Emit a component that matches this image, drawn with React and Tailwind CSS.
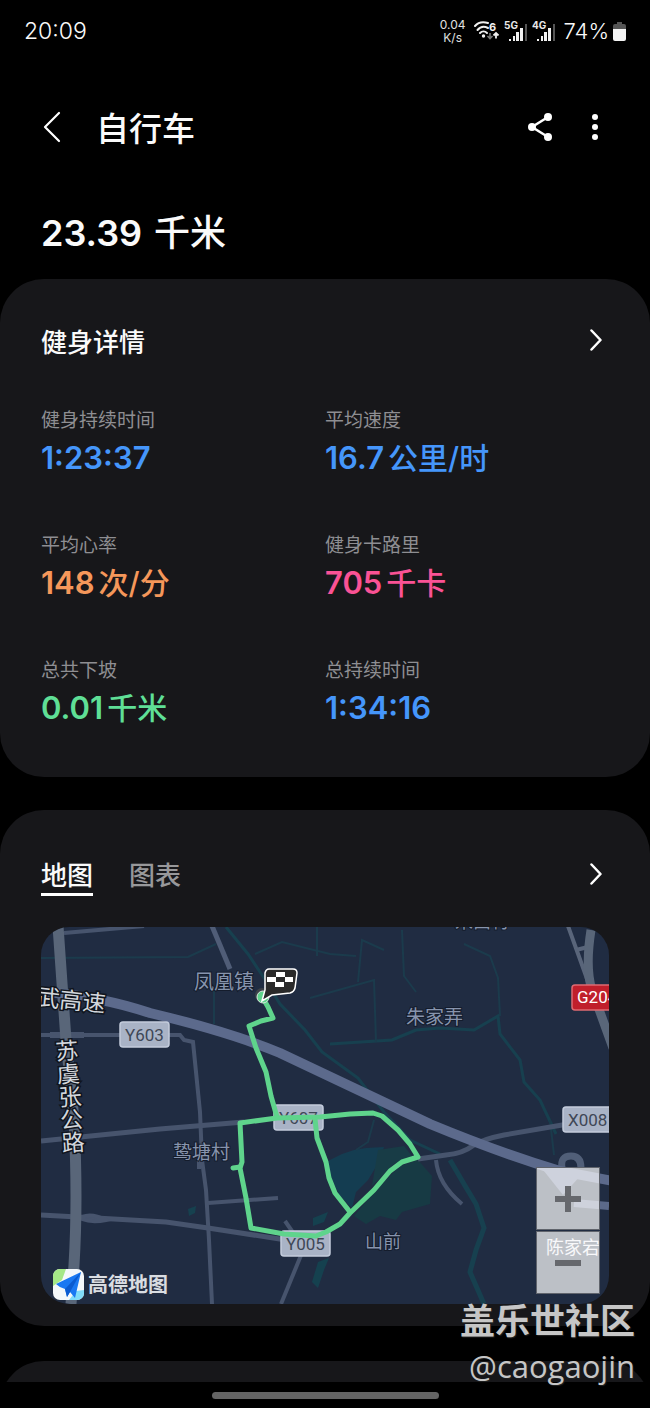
import { clsx } from 'clsx';

const stats = [
  { label: '健身持续时间', value: '1:23:37', color: 'text-[#4596fb]' },
  { label: '平均速度', value: '16.7', unit: '公里/时', color: 'text-[#4596fb]' },
  { label: '平均心率', value: '148', unit: '次/分', color: 'text-[#f5975a]' },
  { label: '健身卡路里', value: '705', unit: '千卡', color: 'text-[#fa5295]' },
  { label: '总共下坡', value: '0.01', unit: '千米', color: 'text-[#5fdf96]' },
  { label: '总持续时间', value: '1:34:16', color: 'text-[#4596fb]' },
];

const Signal = ({ label }) => (
  <svg viewBox="0 0 24 22" className="h-[22px] w-6" role="img" aria-label={label}>
    <text x="0" y="9" fontSize="10" fontWeight="700" fill="#e8e8e8">{label}</text>
    <g fill="#f2f2f2">
      <rect x="5" y="19" width="2" height="2" />
      <rect x="9" y="16" width="2" height="5" />
      <rect x="12" y="12" width="3" height="9" />
      <rect x="16" y="8" width="3" height="13" />
      <rect x="21" y="4" width="2" height="17" fill="#555" />
    </g>
  </svg>
);

const StatusBar = () => (
  <div className="flex h-[62px] items-center justify-between px-6">
    <span className="text-[23px] leading-6 font-light">20:09</span>
    <div className="flex items-center">
      <div className="text-center text-[12px] leading-[13px] text-[#e0e0e0]">
        <div>0.04</div>
        <div>K/s</div>
      </div>
      <svg viewBox="0 0 26 22" className="ml-2 h-[22px] w-[26px]" role="img" aria-label="Wi-Fi 6">
        <g fill="none" stroke="#f0f0f0" strokeWidth="2" strokeLinecap="round">
          <path d="M1 6 C4 2.500 9 1.500 14 3" />
          <path d="M3.500 10 C6 7 10 6 14 8" />
          <path d="M6 13 C8 11 11 11 13 13" />
        </g>
        <circle cx="9.500" cy="16" r="1.700" fill="#f0f0f0" />
        <text x="15" y="11" fontSize="11" fontWeight="700" fill="#f0f0f0">6</text>
        <path d="M16 13 V18 M13.500 16 L16 18.500 L18.500 16" fill="none" stroke="#777" strokeWidth="1.600" />
        <path d="M22 18.500 V13.500 M19.500 15.500 L22 13 L24.500 15.500" fill="none" stroke="#f0f0f0" strokeWidth="1.800" />
      </svg>
      <div className="ml-1 flex gap-1">
        <Signal label="5G" />
        <Signal label="4G" />
      </div>
      <span className="ml-2 text-[22px] leading-6 font-light">74%</span>
      <svg viewBox="0 0 13 19" className="ml-1 h-[19px] w-[13px]" role="img" aria-label="Battery">
        <path d="M4 0 H9 V2 H11 Q13 2 13 4 V8 H0 V4 Q0 2 2 2 H4 Z" fill="#555" />
        <path d="M0 7 H13 V17 Q13 19 11 19 H2 Q0 19 0 17 Z" fill="#f4f4f4" />
      </svg>
    </div>
  </div>
);

const Chevron = () => (
  <svg viewBox="0 0 12 24" className="h-6 w-3" aria-hidden="true">
    <path
      d="M1.500 1.500 L10.500 11 L1.500 20.500"
      fill="none"
      stroke="#fff"
      strokeWidth="2.500"
      strokeLinecap="round"
      strokeLinejoin="round"
    />
  </svg>
);

const RoadSign = ({ x, y, width = 49, children }) => (
  <g>
    <rect x={x} y={y} width={width} height="25" rx="3" fill="#a9b3c6" stroke="#c3ccdc" strokeWidth="1.500" />
    <text x={x + 5} y={y + 19} fontFamily="Roboto, sans-serif" fontSize="17" fill="#3f4756">{children}</text>
  </g>
);

const RouteMap = () => (
  <svg
    viewBox="41 927 568 377"
    className="block h-auto w-full"
    role="img"
    aria-label="骑行路线地图"
    fontFamily="'Noto Sans CJK SC', sans-serif"
  >
    <rect x="41" y="927" width="568" height="377" fill="#202c42" />

    {/* water and green areas */}
    <path d="M326 1162 L342 1154 L354 1150 L366 1148 L384 1147 L380 1160 L368 1180 L356 1192 L352 1208 L340 1196 L334 1184 L328 1172 Z" fill="#143d51" />
    <path d="M374 1192 L400 1166 L418 1160 L432 1176 L430 1204 L402 1212 L396 1220 L380 1216 L366 1224 L354 1216 Z" fill="#173a44" />
    <path d="M378 1150 L404 1146 L412 1156 L394 1164 L372 1186 Z" fill="#183c46" />
    <path d="M188 1209 L196 1206 L195 1213 L189 1216 Z" fill="#16414f" />
    <path d="M313 1218 L328 1212 L324 1222 L313 1226 Z M318 1262 L329 1258 L324 1270 L318 1288 L312 1282 Z" fill="#15414f" />
    <g fill="none" stroke="#17404f" strokeWidth="3">
      <path d="M226 927 L248 954 L264 978 L280 1004 L305 1030 L322 1052 L358 1078 L384 1112 L410 1140 L440 1154" />
      <path d="M450 1160 L464 1184 L476 1204 L484 1228 L476 1250 L470 1272 L484 1304" strokeWidth="5" />
      <path d="M330 1044 L392 1040 L416 1030 L440 1028 L474 1030 L498 1016 L500 1034 L520 1060 L524 1082 L540 1100 L556 1134" />
    </g>
    <g fill="none" stroke="#1b3b4c" strokeWidth="2">
      <path d="M41 958 L188 957 L216 944" />
      <path d="M255 954 L282 942 L330 954 L356 956" />
      <path d="M317 927 V956 M358 982 L362 940 L384 950 M402 930 L404 976 L416 992 M310 998 L374 980 L376 1042" />
      <path d="M464 944 L490 956 L498 978 L500 1016 M214 990 V1024 M550 1120 L554 1155 M374 1120 L368 1142 L356 1150" />
    </g>

    {/* minor roads */}
    <g fill="none" stroke="#47546d" strokeWidth="4">
      <path d="M64 933 L144 926" />
      <path d="M212 926 L230 969" strokeWidth="5" stroke="#505d77" />
      <path d="M41 1035 H180 L184 1040 L193 1042 L200 1112 L202 1160 L206 1190 L209 1240 L212 1304" />
      <path d="M50 1035 H84" strokeWidth="6" />
      <path d="M41 1141 L160 1129 L244 1122" strokeWidth="5" />
      <path d="M41 1215 L96 1218 L166 1222 L208 1228 L286 1240" strokeWidth="5" />
      <path d="M82 1217 Q92 1213 106 1220 Q92 1223 82 1219 Z" />
      <path d="M208 1203 L278 1198 M199 1157 V1169 M285 1221 L294 1234" />
      <path d="M304 1248 L281 1304" />
      <path d="M418 1159 L446 1155 Q462 1154 474 1145 Q484 1139 504 1135 L568 1124" strokeWidth="5" />
      <path d="M436 1160 Q438 1184 462 1204" />
      <path d="M568 926 L586 976 L594 1000 M576 950 L588 947" stroke="#59657a" />
    </g>

    {/* main roads */}
    <g fill="none" stroke="#596679">
      <path d="M58 926 L66 1040 L74 1120 Q78 1200 74 1265 L71 1304" strokeWidth="11" />
      <path d="M591 930 Q585 968 592 990 L613 1048" strokeWidth="9" />
      <path d="M562 1168 Q560 1156 571 1156 Q581 1156 581 1168" stroke="#515f78" strokeWidth="7" />
      <path d="M574 1203 L609 1206" stroke="#5c6a8a" strokeWidth="8" />
    </g>
    <path d="M540 1166 L582 1174 L563 1195 Z" fill="#5c6a8c" />
    <path
      d="M36 991 Q100 996 150 1013 Q230 1032 280 1053 L430 1124 Q500 1153 560 1171 L613 1181"
      fill="none"
      stroke="#5c6a8c"
      strokeWidth="10"
    />

    <RoadSign x={120} y={1022}>Y603</RoadSign>
    <RoadSign x={274} y={1105}>Y607</RoadSign>
    <RoadSign x={281} y={1231}>Y005</RoadSign>
    <RoadSign x={563} y={1107} width={50}>X008</RoadSign>
    <rect x="572" y="985" width="50" height="25" rx="3" fill="#c01f2b" stroke="#de6a72" strokeWidth="1.500" />
    <text x="577" y="1003" fontFamily="Roboto, sans-serif" fontSize="17" fill="#fff">G204</text>

    {/* recorded track */}
    <g fill="none" stroke="#5fd48c" strokeWidth="5" strokeLinejoin="round" strokeLinecap="round">
      <path d="M264 1000 L268 1007 L273 1018 L261 1021 L249 1026 L256 1048 L266 1072 L271 1096 L277 1117" />
      <path d="M240 1123 L277 1118 L320 1117 L350 1114 L373 1113 L382 1116 L398 1130 L410 1144 L418 1157 L402 1162 L390 1171 L374 1190 L350 1213 L340 1224 L326 1232 L316 1236 L284 1234 L251 1228 L246 1198 L240 1168 L242 1162 Z" />
      <path d="M240 1167 L233 1168 M315 1119 L317 1138 L326 1162 L329 1178 L335 1193 L350 1212" />
    </g>

    {/* place names */}
    <g fill="#8794ad" fontSize="19" stroke="#141c2c" strokeWidth="2" paintOrder="stroke">
      <text x="194" y="989" fontSize="20">凤凰镇</text>
      <text x="406" y="1024">朱家弄</text>
      <text x="173" y="1159">鸷塘村</text>
      <text x="365" y="1248" fontSize="18">山前</text>
      <text x="455" y="928" fontSize="18">宋西村</text>
    </g>
    <g fill="#d3d7dc" fontSize="23" stroke="#10151e" strokeWidth="3" paintOrder="stroke">
      <text x="36" y="1005" transform="rotate(6 36 1005)">武高速</text>
      <text x="66" y="1039" transform="rotate(-4 66 1039)" style={{ writingMode: 'vertical-rl' }}>苏虞张公路</text>
    </g>

    {/* finish flag */}
    <circle cx="262" cy="995" r="7" fill="#3b4048" />
    <circle cx="263" cy="997" r="6" fill="#5fd48c" stroke="#d7e6dd" strokeWidth="1" />
    <path
      d="M269 969 H293 Q297 969 297 973 L295 988 Q294 992 290 993 L272 995 L262 1001 L265 990 L265 973 Q266 969 269 969 Z"
      fill="#2a2a2a"
      stroke="#fff"
      strokeWidth="1.500"
    />
    <path
      d="M276 972 H285 V977 H276 Z M267 977 H276 V982 H267 Z M285 977 H293 V982 H285 Z M275 982 H284 V987 H275 Z"
      fill="#fff"
    />

    {/* map provider */}
    <clipPath id="provider">
      <rect x="53" y="1269" width="31" height="31" rx="7" />
    </clipPath>
    <g clipPath="url(#provider)">
      <rect x="53" y="1269" width="31" height="31" fill="#f4f8fa" />
      <path d="M53 1269 H66 L62 1280 L53 1286 Z" fill="#a5e887" />
      <path d="M69 1300 L76 1291 L84 1290 V1300 Z" fill="#7fdcfa" />
    </g>
    <path d="M81 1272 L56 1284 Q60 1288 65 1289 L67 1297 L70 1292 L75 1298 Z" fill="#1a78f2" />
    <path d="M81 1272 L65 1289 L67 1297 L70 1292 Z" fill="#0b5bd0" />
    <text x="88" y="1292" fontSize="20" fontWeight="700" fill="#d9dde2" stroke="#2c3342" strokeWidth="1" paintOrder="stroke">高德地图</text>

    <text x="546" y="1254" fontSize="18" fill="#e6e8ee">陈家宕</text>
  </svg>
);

const App = () => {
  return (
    <div className="relative overflow-hidden bg-black font-[Inter,'Noto_Sans_CJK_SC',sans-serif] text-[#fafafa]">
      <StatusBar />

      {/* App bar */}
      <header className="flex h-[130px] items-center pr-[49px] pl-10">
        <button type="button" aria-label="返回" className="flex h-10 w-6 items-center">
          <svg viewBox="0 0 24 32" className="h-8 w-6">
            <path d="M19 2 L5 16 L19 30" fill="none" stroke="#fff" strokeWidth="2.200" strokeLinecap="round" strokeLinejoin="round" />
          </svg>
        </button>
        <h1 className="ml-8 pt-1 text-[33px] leading-10 font-medium">自行车</h1>
        <button type="button" aria-label="分享" className="ml-auto">
          <svg viewBox="0 0 26 30" className="h-[30px] w-[26px]">
            <path d="M21 5 L5 15 L21 25" fill="none" stroke="#fff" strokeWidth="2.500" />
            <circle cx="21" cy="5" r="4" fill="#fff" />
            <circle cx="5" cy="15" r="4" fill="#fff" />
            <circle cx="21" cy="25" r="4" fill="#fff" />
          </svg>
        </button>
        <button type="button" aria-label="更多选项" className="ml-9">
          <svg viewBox="0 0 12 30" className="h-[30px] w-3" fill="#fff">
            <circle cx="6" cy="5" r="3" />
            <circle cx="6" cy="15" r="3" />
            <circle cx="6" cy="25" r="3" />
          </svg>
        </button>
      </header>

      <div className="flex h-[87px] items-center gap-3 px-[41px] pb-[6px] leading-[44px] font-semibold">
        <span className="text-[36px]">23.39</span>
        <span className="text-[36px] font-medium">千米</span>
      </div>

      {/* Workout details */}
      <section className="rounded-[44px] bg-[#17171a] px-[41px] pt-9 pb-12">
        <div className="flex h-[52px] items-center justify-between pr-[7px]">
          <h2 className="pt-[3px] text-[26px] leading-8 font-medium">健身详情</h2>
          <button type="button" aria-label="查看健身详情">
            <Chevron />
          </button>
        </div>
        <dl className="mt-[42px] grid grid-cols-2 gap-y-[55px]">
          {stats.map((stat) => (
            <div key={stat.label}>
              <dt className="text-[19px] leading-6 text-[#8e8e92]">{stat.label}</dt>
              <dd className={clsx('mt-1 flex h-[42px] items-center gap-1 leading-10 font-semibold', stat.color)}>
                <span className="text-[31px]">{stat.value}</span>
                {stat.unit && <span className="text-[30px] font-medium">{stat.unit}</span>}
              </dd>
            </div>
          ))}
        </dl>
      </section>

      {/* Map */}
      <section className="mt-[33px] rounded-[44px] bg-[#17171a] px-[41px] pt-11 pb-[22px]">
        <div className="flex items-center justify-between pr-[7px]">
          <div role="tablist" className="flex gap-9 text-[26px] leading-[34px] font-medium">
            <button type="button" role="tab" aria-selected="true" className="border-b-3 border-white pt-[5px]">
              地图
            </button>
            <button type="button" role="tab" aria-selected="false" className="border-b-3 border-transparent pt-[5px] text-[#98989a]">
              图表
            </button>
          </div>
          <button type="button" aria-label="查看地图">
            <Chevron />
          </button>
        </div>
        <div className="relative mt-[31px] overflow-hidden rounded-[28px]">
          <RouteMap />
          <div className="absolute right-[9px] bottom-[10px] flex flex-col gap-px">
            <button type="button" aria-label="放大" className="flex h-[63px] w-16 items-center justify-center border border-[#60646c] bg-white/70">
              <svg viewBox="0 0 26 26" className="h-[26px] w-[26px]" fill="#66686d">
                <path d="M10 0 H16 V10 H26 V16 H16 V26 H10 V16 H0 V10 H10 Z" />
              </svg>
            </button>
            <button type="button" aria-label="缩小" className="flex h-[63px] w-16 items-center justify-center border border-[#60646c] bg-white/70">
              <svg viewBox="0 0 26 26" className="h-[26px] w-[26px]" fill="#66686d">
                <path d="M0 10 H26 V16 H0 Z" />
              </svg>
            </button>
          </div>
        </div>
      </section>

      {/* Top edge of the next card */}
      <div className="mt-[35px] h-[21px] overflow-hidden">
        <div className="h-24 rounded-[44px] bg-[#17171a]" />
      </div>

      {/* Navigation handle */}
      <div className="flex h-[26px] items-center justify-center">
        <div className="h-[7px] w-[227px] rounded-full bg-[#646464]" />
      </div>

      {/* Watermark */}
      <div className="absolute right-[15px] bottom-5 text-right text-[#c6c6c6] text-shadow-[1px_1px_1px_#222]">
        <div className="text-[35px] leading-[46px] font-bold">盖乐世社区</div>
        <div className="font-['Open_Sans',sans-serif] text-[31px] leading-[44px]">@caogaojin</div>
      </div>
    </div>
  );
};

export default App;
